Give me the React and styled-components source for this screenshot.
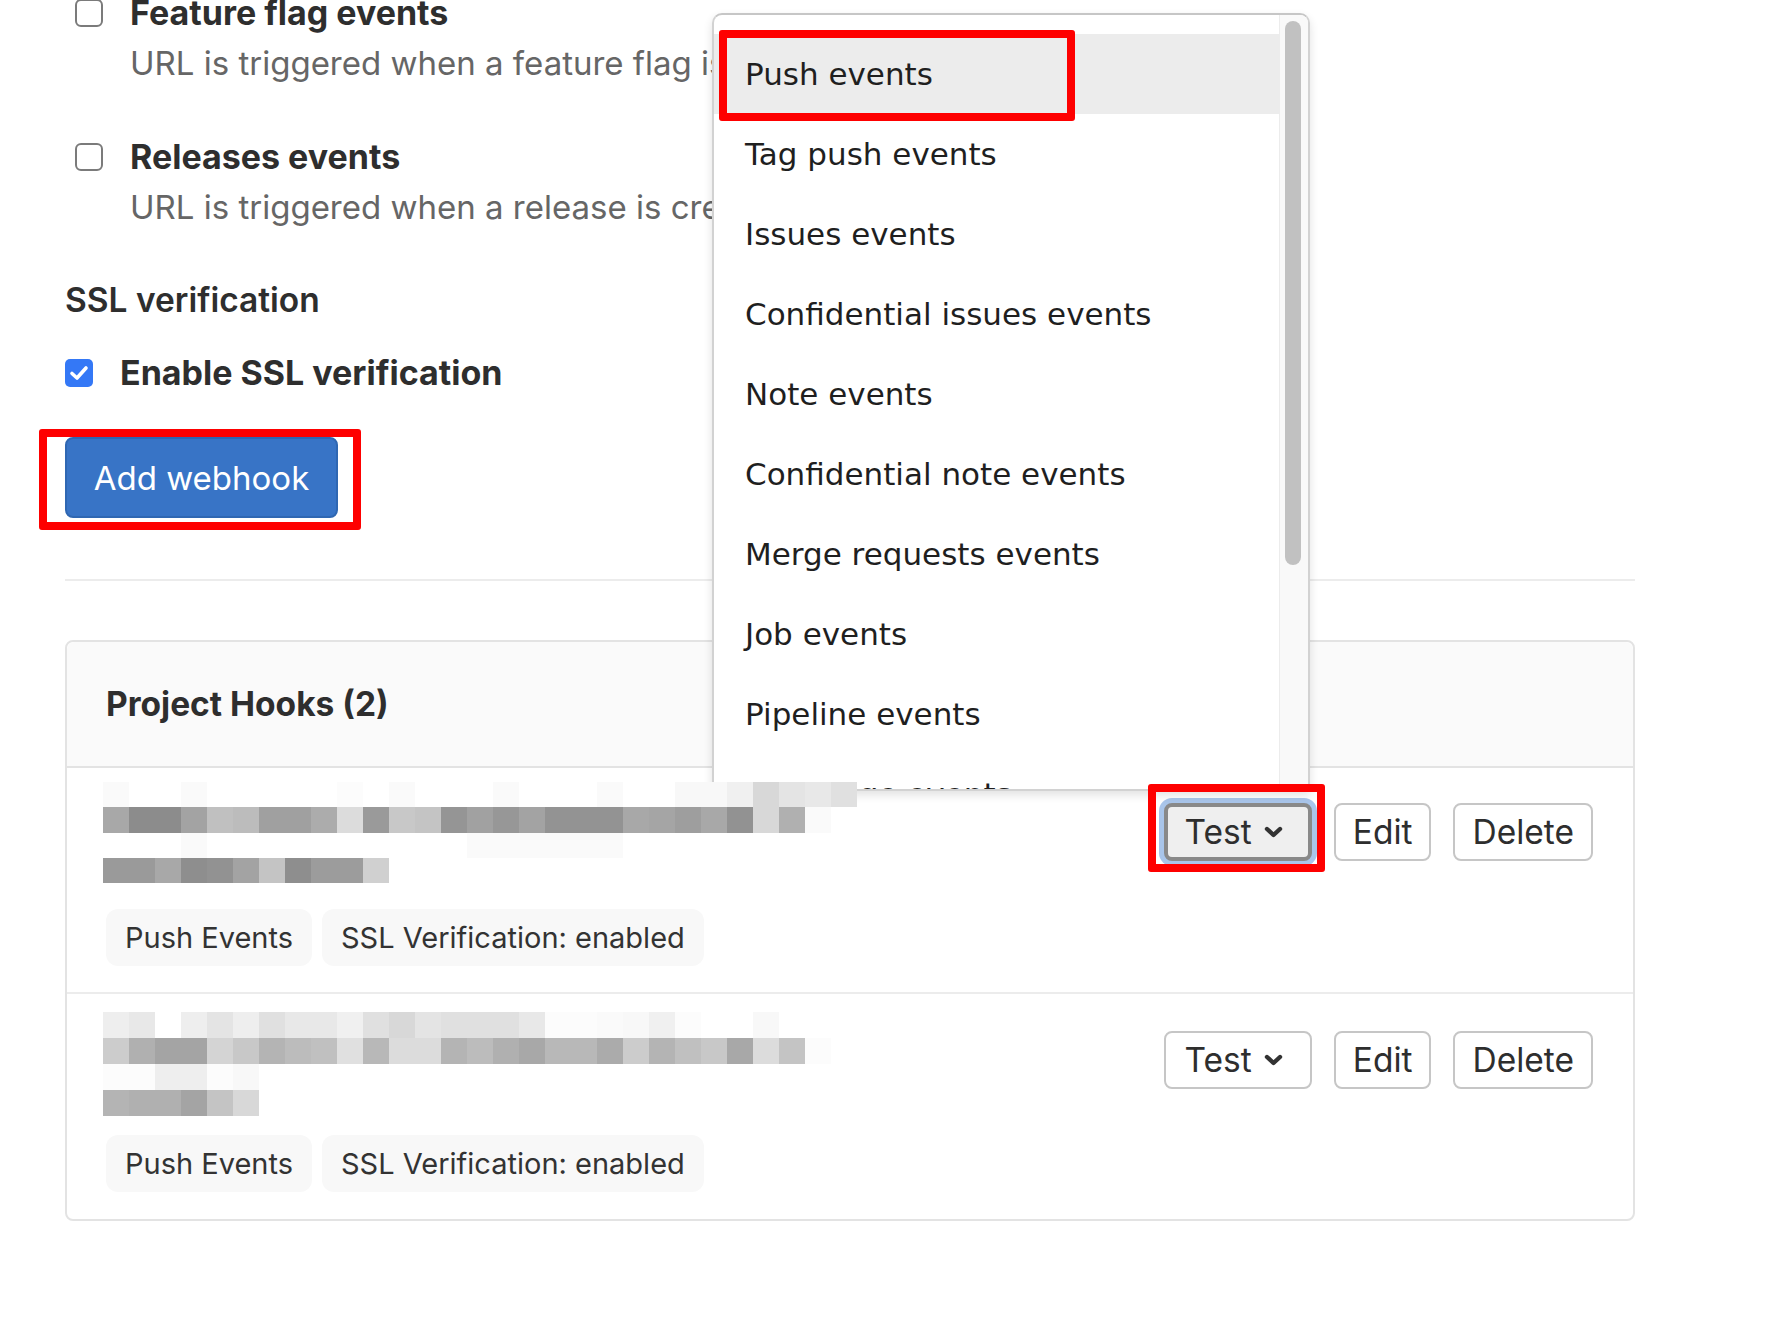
import styled, { createGlobalStyle, css } from "styled-components";

const GlobalStyle = createGlobalStyle`
  body {
    margin: 0;
    background: #fff;
    font-family: Inter, "Liberation Sans", sans-serif;
    color: #303030;
  }
`;

const EVENTS = [
  "Push events",
  "Tag push events",
  "Issues events",
  "Confidential issues events",
  "Note events",
  "Confidential note events",
  "Merge requests events",
  "Job events",
  "Pipeline events",
  "Wiki page events",
];

// pixelated (redacted) url text, one array per line of 26px cells
const HOOKS = [
  {
    padTop: 14,
    gap: 26,
    padBottom: 26,
    btnTop: 35,
    focused: true,
    height: 101,
    lines: [
      "fa ff ff fa ff ff ff ff ff fc ff fa ff ff ff fa ff ff ff fa ff ff f8 f8 f0 d8 e4 e8 e0",
      "a8 8c 8c a3 c0 bc a0 a0 ac dc 9a c8 c4 95 a1 97 a3 93 93 93 a8 a5 9e a8 92 d8 b0 fa",
      "ff ff ff fa ff ff ff ff ff ff ff ff ff ff fa fa fa fa fa fa",
      "9a 9a a8 8e 92 a3 c4 8e 9c 9c d0",
    ],
  },
  {
    padTop: 18,
    gap: 19,
    padBottom: 27,
    btnTop: 37,
    focused: false,
    height: 104,
    lines: [
      "ee e8 ff ee e4 ee e0 e8 e8 f0 e0 d8 e4 e0 e0 e0 e8 fc fc fa f8 f0 fc ff ff f8 ff ff",
      "cc b0 a4 a4 d4 c8 b4 bc c0 e0 b8 dc dc b4 bc b0 a8 b8 b8 ab cc b4 c0 c8 a8 dc c4 fc",
      "fc fc ee ee fc f8",
      "b4 b0 b0 a4 c4 d8",
    ],
  },
];

const Page = styled.div`
  position: relative;
  width: 1776px;
  height: 1328px;
  overflow: hidden;
  background: #fff;
`;

const Main = styled.main`
  width: 1570px;
  padding-left: 65px;
`;

const CheckItem = styled.div`
  display: grid;
  grid-template-columns: 28px 1fr;
  column-gap: 27px;
  padding-left: ${(p) => p.indent || 0}px;
  margin-top: ${(p) => p.top || 0}px;
`;

const Box = styled.span`
  width: 28px;
  height: 28px;
  box-sizing: border-box;
  margin-top: 11px;
  border-radius: 6px;
  border: 2px solid #7b7b7b;
  background: #fff;
  display: flex;
  align-items: center;
  justify-content: center;
  ${(p) =>
    p.checked &&
    css`
      border: none;
      border-radius: 5px;
      background: #3478f6;
    `}
`;

const Label = styled.div`
  font-size: 34px;
  line-height: 50px;
  font-weight: 700;
  color: #2e2e2e;
  white-space: nowrap;
`;

const Help = styled.div`
  grid-column: 2;
  font-size: 33px;
  line-height: 50px;
  color: #666;
  white-space: nowrap;
`;

const Heading = styled.h4`
  margin: 43px 0 23px;
  font-size: 33.5px;
  line-height: 50px;
  font-weight: 600;
  color: #2e2e2e;
`;

const PrimaryButton = styled.button`
  display: block;
  margin-top: 39px;
  width: 273px;
  height: 81px;
  box-sizing: border-box;
  border: 2px solid #2f67b2;
  border-radius: 8px;
  background: #3874c6;
  color: #fff;
  font-family: inherit;
  font-size: 33px;
`;

const Divider = styled.hr`
  margin: 61px 0 0;
  border: none;
  border-top: 2px solid #ececec;
`;

const Card = styled.section`
  margin-top: 59px;
  border: 2px solid #e3e3e3;
  border-radius: 8px;
`;

const CardHeader = styled.header`
  height: 124px;
  display: flex;
  align-items: center;
  padding: 0 39px;
  background: #fafafa;
  border-bottom: 2px solid #e3e3e3;
  border-radius: 8px 8px 0 0;
  font-size: 33.5px;
  font-weight: 700;
  color: #2e2e2e;
`;

const Row = styled.div`
  display: flex;
  justify-content: space-between;
  padding: 0 40px 0 36px;
  & + & {
    border-top: 2px solid #ececec;
  }
`;

const RowMain = styled.div`
  padding-top: ${(p) => p.padTop}px;
  padding-bottom: ${(p) => p.padBottom}px;
`;

const Redacted = styled.svg`
  display: block;
  position: relative;
  z-index: 3;
`;

const Badges = styled.div`
  display: flex;
  gap: 10px;
  margin-top: ${(p) => p.gap}px;
`;

const Badge = styled.span`
  height: 57px;
  display: flex;
  align-items: center;
  padding: 0 19px;
  margin-left: 3px;
  border-radius: 12px;
  background: #f8f8f8;
  font-size: 29px;
  color: #333;
  & + & {
    margin-left: 0;
  }
`;

const Actions = styled.div`
  display: flex;
  gap: 22px;
  margin-top: ${(p) => p.top}px;
`;

const Button = styled.button`
  height: 58px;
  box-sizing: border-box;
  display: flex;
  align-items: center;
  gap: 11px;
  padding: 0 17px;
  border: 2px solid #c6c6c6;
  border-radius: 8px;
  background: #fff;
  color: #2e2e2e;
  font-family: inherit;
  font-size: 33.5px;
  ${(p) =>
    p.focused &&
    css`
      border: 4px solid #898989;
      background: #efefef;
      box-shadow: 0 0 0 5px #a9c5ea;
    `}
`;

const TestButton = styled(Button)`
  padding: 0 ${(p) => (p.focused ? 24 : 26)}px 0 ${(p) => (p.focused ? 17 : 19)}px;
`;

const Dropdown = styled.div`
  position: absolute;
  z-index: 2;
  left: 712px;
  top: 13px;
  width: 598px;
  height: 778px;
  box-sizing: border-box;
  display: flex;
  background: #fff;
  border: 2px solid #d2d2d2;
  border-top-color: #c6c6c6;
  border-radius: 10px 10px 0 0;
  box-shadow: 0 4px 10px rgba(0, 0, 0, 0.12);
  overflow: hidden;
`;

const Options = styled.ul`
  flex: 1;
  margin: 0;
  padding: 19px 0 0;
  list-style: none;
`;

const Option = styled.li`
  height: 80px;
  display: flex;
  align-items: center;
  padding-left: 31px;
  font-family: "DejaVu Sans", sans-serif;
  font-size: 31px;
  color: #1f1f1f;
  white-space: nowrap;
  background: ${(p) => (p.active ? "#ececec" : "transparent")};
`;

const Track = styled.div`
  width: 28px;
  background: #f9f9f9;
  border-left: 1px solid #ececec;
`;

const Thumb = styled.div`
  margin: 6px 0 0 5px;
  width: 16px;
  height: 544px;
  border-radius: 8px;
  background: #c1c1c1;
`;

const Marker = styled.div`
  position: absolute;
  z-index: 4;
  box-sizing: border-box;
  border: 8px solid #fe0000;
  border-radius: 3px;
  left: ${(p) => p.x}px;
  top: ${(p) => p.y}px;
  width: ${(p) => p.w}px;
  height: ${(p) => p.h}px;
`;

const Check = () => (
  <svg width="20" height="18" viewBox="0 0 20 18">
    <path
      d="M3 9.5 L8 14 L17 4"
      fill="none"
      stroke="#fff"
      strokeWidth="3.6"
      strokeLinecap="round"
      strokeLinejoin="round"
    />
  </svg>
);

const Chevron = () => (
  <svg width="21" height="14" viewBox="0 0 21 14">
    <path
      d="M4 4 L10.5 10 L17 4"
      fill="none"
      stroke="#333"
      strokeWidth="4.4"
      strokeLinecap="round"
      strokeLinejoin="round"
    />
  </svg>
);

const CELL = 26;

const Pixels = ({ lines, h }) => {
  const rows = lines.map((l) => l.split(" "));
  const w = Math.max(...rows.map((r) => r.length)) * CELL;
  const lh = h / rows.length;
  return (
    <Redacted width={w} height={h}>
      {rows.map((r, y) =>
        r.map((g, x) => (
          <rect
            key={`${y}-${x}`}
            x={x * CELL}
            y={Math.round(y * lh)}
            width={CELL}
            height={Math.round((y + 1) * lh) - Math.round(y * lh)}
            fill={`#${g}${g}${g}`}
          />
        ))
      )}
    </Redacted>
  );
};

const App = () => {
  return (
    <Page>
      <GlobalStyle />
      <Main>
        <CheckItem indent={10} top={-12}>
          <Box />
          <Label>Feature flag events</Label>
          <Help>URL is triggered when a feature flag is turned on or off</Help>
        </CheckItem>
        <CheckItem indent={10} top={44}>
          <Box />
          <Label>Releases events</Label>
          <Help>URL is triggered when a release is created/updated</Help>
        </CheckItem>

        <Heading>SSL verification</Heading>
        <CheckItem>
          <Box checked>
            <Check />
          </Box>
          <Label>Enable SSL verification</Label>
        </CheckItem>

        <PrimaryButton>Add webhook</PrimaryButton>
        <Divider />

        <Card>
          <CardHeader>Project Hooks (2)</CardHeader>
          {HOOKS.map((hook, i) => (
            <Row key={i}>
              <RowMain padTop={hook.padTop} padBottom={hook.padBottom}>
                <Pixels lines={hook.lines} h={hook.height} />
                <Badges gap={hook.gap}>
                  <Badge>Push Events</Badge>
                  <Badge>SSL Verification: enabled</Badge>
                </Badges>
              </RowMain>
              <Actions top={hook.btnTop}>
                <TestButton focused={hook.focused}>
                  Test <Chevron />
                </TestButton>
                <Button>Edit</Button>
                <Button>Delete</Button>
              </Actions>
            </Row>
          ))}
        </Card>
      </Main>

      <Dropdown>
        <Options>
          {EVENTS.map((e, i) => (
            <Option key={e} active={i === 0}>
              {e}
            </Option>
          ))}
        </Options>
        <Track>
          <Thumb />
        </Track>
      </Dropdown>

      <Marker x={719} y={30} w={356} h={91} />
      <Marker x={39} y={429} w={322} h={101} />
      <Marker x={1148} y={784} w={177} h={88} />
    </Page>
  );
};

export default App;
